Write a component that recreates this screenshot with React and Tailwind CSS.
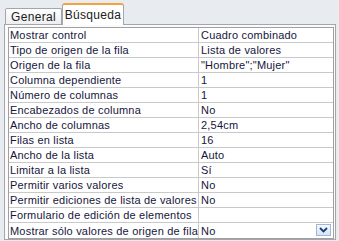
const rows = [
  ['Mostrar control', 'Cuadro combinado'],
  ['Tipo de origen de la fila', 'Lista de valores'],
  ['Origen de la fila', '"Hombre";"Mujer"'],
  ['Columna dependiente', '1'],
  ['Número de columnas', '1'],
  ['Encabezados de columna', 'No'],
  ['Ancho de columnas', '2,54cm'],
  ['Filas en lista', '16'],
  ['Ancho de la lista', 'Auto'],
  ['Limitar a la lista', 'Sí'],
  ['Permitir varios valores', 'No'],
  ['Permitir ediciones de lista de valores', 'No'],
  ['Formulario de edición de elementos', ''],
  ['Mostrar sólo valores de origen de fila', 'No'],
];

function ComboButton() {
  return (
    <div className="absolute right-[2px] top-[1px] w-[15px] h-[12px] border border-[#9fb8d8] bg-gradient-to-b from-[#f4f8fd] to-[#d6e4f5] flex items-center justify-center">
      <svg width="9" height="6" viewBox="0 0 9 6">
        <path d="M1 1 L4.5 4.5 L8 1" fill="none" stroke="#1e3a6e" strokeWidth="1.8" />
      </svg>
    </div>
  );
}

export default function App() {
  return (
    <div className="w-[339px] h-[241px] bg-[#e8ebef] overflow-hidden text-[11px] leading-none text-[#16163c]" style={{ fontFamily: '"Liberation Sans", Arial, sans-serif' }}>
      {/* Tabs */}
      <div className="flex items-end h-[24px] pl-[5px]">
        <div className="h-[16px] w-[57px] border border-b-0 border-[#a3a7ad] rounded-t-[2px] bg-gradient-to-b from-white to-[#eceef1] flex items-center justify-center text-[12px] tracking-[0.3px] text-[#202020]">
          General
        </div>
        <div className="relative z-10 -mb-px h-[22px] w-[62px] border-x border-[#a3a7ad] border-t-2 border-t-[#f2a43a] rounded-t-[3px] bg-white flex items-center justify-center text-[12px] tracking-[0.3px] text-[#202020]">
          Búsqueda
        </div>
      </div>
      {/* Panel */}
      <div className="ml-[4px] w-[332px] h-[216px] border border-[#a3a7ad] bg-[#fbfbfc] pt-[2px] pl-[3px]">
        <div className="w-[326px] border border-[#a0a0a0] bg-white tracking-[0.2px]">
          {rows.map(([label, value], i) => (
            <div key={i} className={`flex h-[15px] ${i < rows.length - 1 ? 'border-b border-[#c9c9c9]' : ''}`}>
              <div className="w-[190px] border-r border-[#c9c9c9] pl-[1px] pt-[1px] flex items-center overflow-hidden whitespace-nowrap">
                {label}
              </div>
              <div className="relative flex-1 pl-[2px] pt-[1px] flex items-center whitespace-nowrap">
                {value}
                {i === rows.length - 1 && <ComboButton />}
              </div>
            </div>
          ))}
        </div>
      </div>
    </div>
  );
}
